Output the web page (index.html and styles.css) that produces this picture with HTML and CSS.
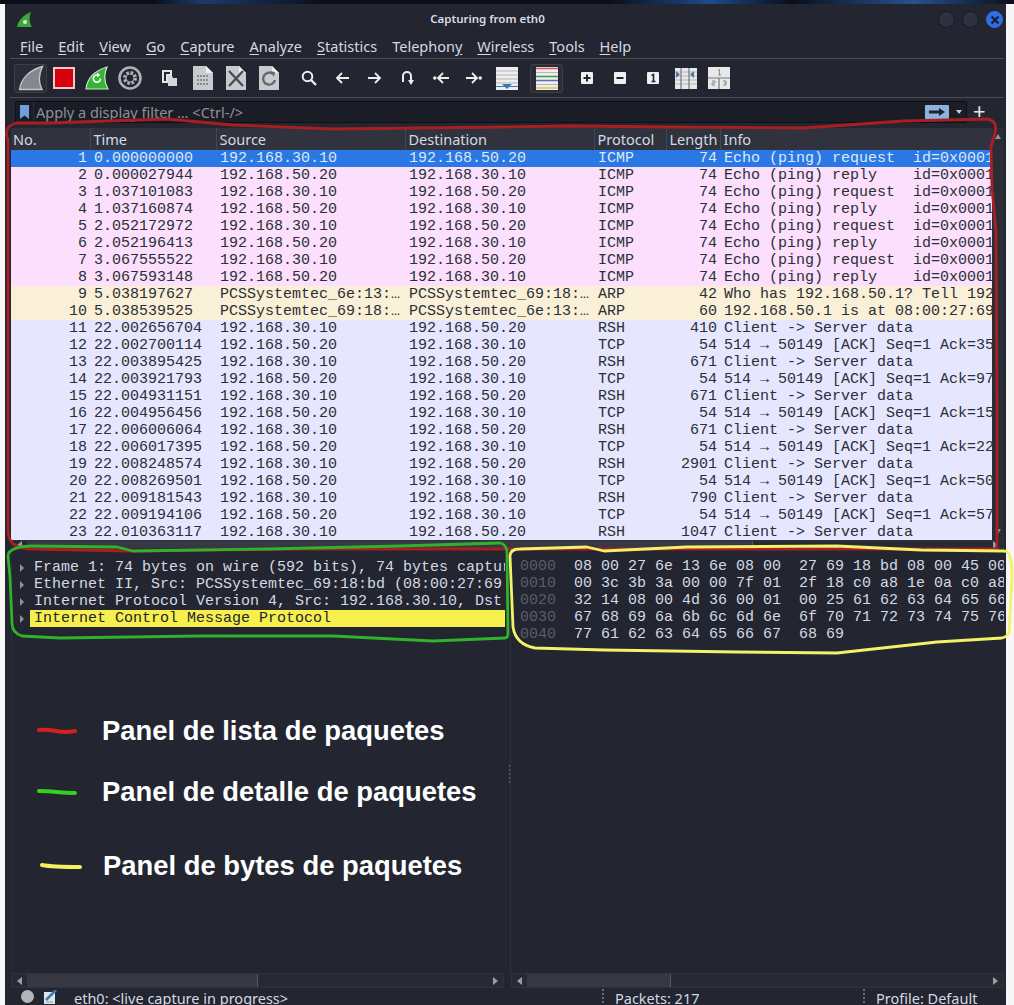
FILE: index.html
```html
<!DOCTYPE html>
<html lang="es">
<head>
    <meta charset="UTF-8">
    <meta name="viewport" content="width=device-width, initial-scale=1.0">
    <title>Capturing from eth0</title>
    <link rel="stylesheet" href="styles.css">
</head>
<body>
    <div class="wallpaper"></div>
    <div class="window">
        <header class="titlebar">
            <svg class="logo" width="15" height="15" viewBox="0 0 15 15"><path d="M0 15C1 9 6 3 14 0C12 5 12 10 15 15Z" fill="#3aa83a"/><circle cx="8" cy="10" r="2" fill="#d8f0d8"/></svg>
            <span class="title">Capturing from eth0</span>
            <div class="controls">
                <span class="ctl"></span>
                <span class="ctl"></span>
                <span class="ctl ctl-close"><svg width="10" height="10" viewBox="0 0 10 10"><path d="M1.5 1.5L8.5 8.5M8.5 1.5L1.5 8.5" stroke="#16203a" stroke-width="2.4"/></svg></span>
            </div>
        </header>

        <nav class="menu">
            <a><u>F</u>ile</a>
            <a><u>E</u>dit</a>
            <a><u>V</u>iew</a>
            <a><u>G</u>o</a>
            <a><u>C</u>apture</a>
            <a><u>A</u>nalyze</a>
            <a><u>S</u>tatistics</a>
            <a>Telephon<u>y</u></a>
            <a><u>W</u>ireless</a>
            <a><u>T</u>ools</a>
            <a><u>H</u>elp</a>
        </nav>

        <div class="toolbar">
            <span class="tool tool-on"><svg width="26" height="26" viewBox="0 0 26 26"><path d="M1.5 24.5C3 14 11 5 24.5 1.5C21 9 20 17 24 24.5Z" fill="#85878d" stroke="#c4c5c8" stroke-width="1.4"/></svg></span>
            <span class="tool"><svg width="22" height="22" viewBox="0 0 22 22"><rect x="1" y="1" width="20" height="20" fill="#d8000c" stroke="#f0c8c4" stroke-width="2"/></svg></span>
            <span class="tool"><svg width="24" height="24" viewBox="0 0 24 24"><path d="M1 23C2 13 9 5 22 1C19 8 19 16 23 23Z" fill="#38b238" stroke="#c8ecc8" stroke-width="1.2"/><path d="M15.500 12.500A3.600 3.600 0 1 1 12 9" fill="none" stroke="#f2fff2" stroke-width="1.700"/><path d="M12 6.500l3.500 2.500-3.500 2.500z" fill="#f2fff2"/></svg></span>
            <span class="tool"><svg width="24" height="24" viewBox="0 0 24 24"><circle cx="12" cy="12" r="10.500" fill="none" stroke="#aeb0b5" stroke-width="2.600"/><circle cx="12" cy="12" r="5.500" fill="none" stroke="#aeb0b5" stroke-width="3" stroke-dasharray="2.600 1.700"/><circle cx="12" cy="12" r="4" fill="none" stroke="#aeb0b5" stroke-width="1.200"/></svg></span>
            <span class="sep"></span>
            <span class="tool"><svg width="15" height="17" viewBox="0 0 15 17"><path d="M1 1H9V5H5V12H1Z" fill="none" stroke="#e4e5e8" stroke-width="2"/><path d="M6 6H10L11 8H15V16H6Z" fill="#d4d5d8"/></svg></span>
            <span class="tool"><svg width="20" height="24" viewBox="0 0 20 24"><path d="M0 0H13L20 7V24H0Z" fill="#c9cacd"/><path d="M13 0L20 7H13Z" fill="#eeeeee"/><path d="M4 10H16M4 14H16M4 18H16" stroke="#8a8b90" stroke-width="2" stroke-dasharray="2 1"/></svg></span>
            <span class="tool"><svg width="20" height="24" viewBox="0 0 20 24"><path d="M0 0H13L20 7V24H0Z" fill="#c9cacd"/><path d="M13 0L20 7H13Z" fill="#eeeeee"/><path d="M3 5L17 20M17 5L3 20" stroke="#4a4c54" stroke-width="2.400"/></svg></span>
            <span class="tool"><svg width="20" height="24" viewBox="0 0 20 24"><path d="M0 0H13L20 7V24H0Z" fill="#c9cacd"/><path d="M13 0L20 7H13Z" fill="#eeeeee"/><path d="M14 8A6 6 0 1 0 16 14" fill="none" stroke="#65676e" stroke-width="2.400"/><path d="M11 5l5 1-1 5z" fill="#65676e"/></svg></span>
            <span class="sep"></span>
            <span class="tool"><svg width="16" height="16" viewBox="0 0 16 16"><circle cx="6.500" cy="6.500" r="4.800" fill="none" stroke="#eceded" stroke-width="2"/><path d="M10 10L15 15" stroke="#eceded" stroke-width="2.400"/></svg></span>
            <span class="tool"><svg width="14" height="12" viewBox="0 0 14 12"><path d="M14 6H2M7 1L2 6L7 11" fill="none" stroke="#eceded" stroke-width="1.800"/></svg></span>
            <span class="tool"><svg width="14" height="12" viewBox="0 0 14 12"><path d="M0 6H12M7 1L12 6L7 11" fill="none" stroke="#eceded" stroke-width="1.800"/></svg></span>
            <span class="tool"><svg width="13" height="14" viewBox="0 0 13 14"><path d="M2 11V5A4 4 0 0 1 10 5V10" fill="none" stroke="#eceded" stroke-width="2"/><path d="M7 9H13L10 14Z" fill="#eceded"/></svg></span>
            <span class="tool"><svg width="16" height="12" viewBox="0 0 16 12"><circle cx="1.800" cy="6" r="1.800" fill="#eceded"/><path d="M16 6H6M10 1L5 6L10 11" fill="none" stroke="#eceded" stroke-width="1.800"/></svg></span>
            <span class="tool"><svg width="16" height="12" viewBox="0 0 16 12"><circle cx="14.200" cy="6" r="1.800" fill="#eceded"/><path d="M0 6H10M6 1L11 6L6 11" fill="none" stroke="#eceded" stroke-width="1.800"/></svg></span>
            <span class="tool"><svg width="22" height="23" viewBox="0 0 22 23"><rect width="22" height="23" fill="#eeeeee"/><path d="M0 4H22M0 8H22M0 12H22M0 16H22" stroke="#b4b5b9" stroke-width="1"/><path d="M6 17H16L11 22Z" fill="#3b78b8"/><rect x="0" y="19" width="22" height="1" fill="#3b78b8"/></svg></span>
            <span class="sep"></span>
            <span class="tool tool-on"><svg width="22" height="23" viewBox="0 0 22 23"><rect width="22" height="23" fill="#eeeeee"/><path d="M0 1.500H22" stroke="#d55" stroke-width="1.500"/><path d="M0 5.500H22" stroke="#b4b5b9"/><path d="M0 9.500H22" stroke="#3c9c3c" stroke-width="1.500"/><path d="M0 13.500H22" stroke="#5a6cc0" stroke-width="1.500"/><path d="M0 17.500H22" stroke="#b4b5b9"/><path d="M0 21H22" stroke="#d8c040" stroke-width="1.500"/></svg></span>
            <span class="sep"></span>
            <span class="tool"><svg width="12" height="12" viewBox="0 0 12 12"><rect width="12" height="12" rx="1" fill="#f0f0f0"/><path d="M6 2.500V9.500M2.500 6H9.500" stroke="#23252f" stroke-width="2"/></svg></span>
            <span class="tool"><svg width="12" height="12" viewBox="0 0 12 12"><rect width="12" height="12" rx="1" fill="#f0f0f0"/><path d="M2.500 6H9.500" stroke="#23252f" stroke-width="2"/></svg></span>
            <span class="tool"><svg width="12" height="12" viewBox="0 0 12 12"><rect width="12" height="12" rx="1" fill="#f0f0f0"/><path d="M4.500 3.500L6.500 2.500V9.500M4.500 9.500H8.500" fill="none" stroke="#23252f" stroke-width="1.600"/></svg></span>
            <span class="tool"><svg width="22" height="21" viewBox="0 0 22 21"><rect width="22" height="21" fill="#e8e8e8"/><path d="M0 4H22M0 8H22M0 12H22M0 16H22" stroke="#b4b5b9"/><path d="M6 0V21M14 0V21" stroke="#77797e" stroke-width="1.200"/><path d="M1 3L5 6.500L1 10ZM19 3L15 6.500L19 10Z" fill="#3b78b8"/></svg></span>
            <span class="tool"><svg width="22" height="22" viewBox="0 0 22 22"><rect width="22" height="22" fill="#e8e8e8"/><path d="M0 11H22M11 11V22" stroke="#77797e" stroke-width="1.200"/><path d="M10 3L11.500 2.500V8M10 8H13M4 14H7V16H4V18H7M15 14H18V18H15M16 16H18" fill="none" stroke="#77797e" stroke-width=".8"/></svg></span>
        </div>

        <div class="filter">
            <div class="filter-box">
                <svg class="bookmark" width="9" height="14" viewBox="0 0 9 14"><path d="M0 0H9V14L4.500 10.500L0 14Z" fill="#6c9fdc"/></svg>
                <span class="filter-text">Apply a display filter … &lt;Ctrl-/&gt;</span>
                <span class="apply"><svg width="16" height="8" viewBox="0 0 16 8"><path d="M0 2.500H10V0L16 4L10 8V5.500H0Z" fill="#1d2230"/></svg></span>
                <span class="drop"></span>
            </div>
            <span class="plus">+</span>
        </div>

        <div class="list">
            <div class="list-scroll">
                <table class="packets">
                    <thead>
                        <tr>
                            <th class="c-no">No.</th>
                            <th class="c-time">Time</th>
                            <th class="c-addr">Source</th>
                            <th class="c-addr">Destination</th>
                            <th class="c-proto">Protocol</th>
                            <th class="c-len">Length</th>
                            <th class="c-info">Info</th>
                        </tr>
                    </thead>
                    <tbody>
                        <tr class="sel"><td class="r">1</td><td>0.000000000</td><td>192.168.30.10</td><td>192.168.50.20</td><td>ICMP</td><td class="r">74</td><td>Echo (ping) request  id=0x0001</td></tr>
                        <tr class="icmp"><td class="r">2</td><td>0.000027944</td><td>192.168.50.20</td><td>192.168.30.10</td><td>ICMP</td><td class="r">74</td><td>Echo (ping) reply    id=0x0001</td></tr>
                        <tr class="icmp"><td class="r">3</td><td>1.037101083</td><td>192.168.30.10</td><td>192.168.50.20</td><td>ICMP</td><td class="r">74</td><td>Echo (ping) request  id=0x0001</td></tr>
                        <tr class="icmp"><td class="r">4</td><td>1.037160874</td><td>192.168.50.20</td><td>192.168.30.10</td><td>ICMP</td><td class="r">74</td><td>Echo (ping) reply    id=0x0001</td></tr>
                        <tr class="icmp"><td class="r">5</td><td>2.052172972</td><td>192.168.30.10</td><td>192.168.50.20</td><td>ICMP</td><td class="r">74</td><td>Echo (ping) request  id=0x0001</td></tr>
                        <tr class="icmp"><td class="r">6</td><td>2.052196413</td><td>192.168.50.20</td><td>192.168.30.10</td><td>ICMP</td><td class="r">74</td><td>Echo (ping) reply    id=0x0001</td></tr>
                        <tr class="icmp"><td class="r">7</td><td>3.067555522</td><td>192.168.30.10</td><td>192.168.50.20</td><td>ICMP</td><td class="r">74</td><td>Echo (ping) request  id=0x0001</td></tr>
                        <tr class="icmp"><td class="r">8</td><td>3.067593148</td><td>192.168.50.20</td><td>192.168.30.10</td><td>ICMP</td><td class="r">74</td><td>Echo (ping) reply    id=0x0001</td></tr>
                        <tr class="arp"><td class="r">9</td><td>5.038197627</td><td>PCSSystemtec_6e:13:…</td><td>PCSSystemtec_69:18:…</td><td>ARP</td><td class="r">42</td><td>Who has 192.168.50.1? Tell 192</td></tr>
                        <tr class="arp"><td class="r">10</td><td>5.038539525</td><td>PCSSystemtec_69:18:…</td><td>PCSSystemtec_6e:13:…</td><td>ARP</td><td class="r">60</td><td>192.168.50.1 is at 08:00:27:69</td></tr>
                        <tr class="tcp"><td class="r">11</td><td>22.002656704</td><td>192.168.30.10</td><td>192.168.50.20</td><td>RSH</td><td class="r">410</td><td>Client -&gt; Server data</td></tr>
                        <tr class="tcp"><td class="r">12</td><td>22.002700114</td><td>192.168.50.20</td><td>192.168.30.10</td><td>TCP</td><td class="r">54</td><td>514 → 50149 [ACK] Seq=1 Ack=35</td></tr>
                        <tr class="tcp"><td class="r">13</td><td>22.003895425</td><td>192.168.30.10</td><td>192.168.50.20</td><td>RSH</td><td class="r">671</td><td>Client -&gt; Server data</td></tr>
                        <tr class="tcp"><td class="r">14</td><td>22.003921793</td><td>192.168.50.20</td><td>192.168.30.10</td><td>TCP</td><td class="r">54</td><td>514 → 50149 [ACK] Seq=1 Ack=97</td></tr>
                        <tr class="tcp"><td class="r">15</td><td>22.004931151</td><td>192.168.30.10</td><td>192.168.50.20</td><td>RSH</td><td class="r">671</td><td>Client -&gt; Server data</td></tr>
                        <tr class="tcp"><td class="r">16</td><td>22.004956456</td><td>192.168.50.20</td><td>192.168.30.10</td><td>TCP</td><td class="r">54</td><td>514 → 50149 [ACK] Seq=1 Ack=15</td></tr>
                        <tr class="tcp"><td class="r">17</td><td>22.006006064</td><td>192.168.30.10</td><td>192.168.50.20</td><td>RSH</td><td class="r">671</td><td>Client -&gt; Server data</td></tr>
                        <tr class="tcp"><td class="r">18</td><td>22.006017395</td><td>192.168.50.20</td><td>192.168.30.10</td><td>TCP</td><td class="r">54</td><td>514 → 50149 [ACK] Seq=1 Ack=22</td></tr>
                        <tr class="tcp"><td class="r">19</td><td>22.008248574</td><td>192.168.30.10</td><td>192.168.50.20</td><td>RSH</td><td class="r">2901</td><td>Client -&gt; Server data</td></tr>
                        <tr class="tcp"><td class="r">20</td><td>22.008269501</td><td>192.168.50.20</td><td>192.168.30.10</td><td>TCP</td><td class="r">54</td><td>514 → 50149 [ACK] Seq=1 Ack=50</td></tr>
                        <tr class="tcp"><td class="r">21</td><td>22.009181543</td><td>192.168.30.10</td><td>192.168.50.20</td><td>RSH</td><td class="r">790</td><td>Client -&gt; Server data</td></tr>
                        <tr class="tcp"><td class="r">22</td><td>22.009194106</td><td>192.168.50.20</td><td>192.168.30.10</td><td>TCP</td><td class="r">54</td><td>514 → 50149 [ACK] Seq=1 Ack=57</td></tr>
                        <tr class="tcp"><td class="r">23</td><td>22.010363117</td><td>192.168.30.10</td><td>192.168.50.20</td><td>RSH</td><td class="r">1047</td><td>Client -&gt; Server data</td></tr>
                    </tbody>
                </table>
            </div>
            <div class="vbar">
                <span class="vbar-up"></span>
                <span class="vbar-down"></span>
            </div>
        </div>

        <div class="hbar hbar-thin">
            <span class="arrow arrow-l"></span>
            <span class="thumb thumb-list"></span>
            <span class="arrow arrow-r"></span>
        </div>

        <div class="panes">
            <section class="pane pane-left">
                <ul class="details">
                    <li><span class="tri"></span><span class="line">Frame 1: 74 bytes on wire (592 bits), 74 bytes captur</span></li>
                    <li><span class="tri"></span><span class="line">Ethernet II, Src: PCSSystemtec_69:18:bd (08:00:27:69</span></li>
                    <li><span class="tri"></span><span class="line">Internet Protocol Version 4, Src: 192.168.30.10, Dst</span></li>
                    <li><span class="tri"></span><span class="line line-hit">Internet Control Message Protocol</span></li>
                </ul>
                <div class="legend">
                    <div class="legend-row">
                        <svg width="40" height="8" viewBox="0 0 40 8"><path d="M2 3C12 2 16 3 22 4.500C28 5.500 32 5 38 4" fill="none" stroke="#d4211f" stroke-width="4" stroke-linecap="round"/></svg>
                        <span>Panel de lista de paquetes</span>
                    </div>
                    <div class="legend-row legend-green">
                        <svg width="40" height="8" viewBox="0 0 40 8"><path d="M2 3C14 3 26 5 38 5" fill="none" stroke="#2fd41f" stroke-width="4" stroke-linecap="round"/></svg>
                        <span>Panel de detalle de paquetes</span>
                    </div>
                    <div class="legend-row legend-yellow">
                        <svg width="42" height="8" viewBox="0 0 42 8"><path d="M2 3C12 5 26 5 40 5" fill="none" stroke="#f4f060" stroke-width="4" stroke-linecap="round"/></svg>
                        <span>Panel de bytes de paquetes</span>
                    </div>
                </div>
            </section>
            <div class="grip"></div>
            <section class="pane pane-right">
<pre class="hex"><span class="off">0000</span>  08 00 27 6e 13 6e 08 00  27 69 18 bd 08 00 45 00
<span class="off">0010</span>  00 3c 3b 3a 00 00 7f 01  2f 18 c0 a8 1e 0a c0 a8
<span class="off">0020</span>  32 14 08 00 4d 36 00 01  00 25 61 62 63 64 65 66
<span class="off">0030</span>  67 68 69 6a 6b 6c 6d 6e  6f 70 71 72 73 74 75 76
<span class="off">0040</span>  77 61 62 63 64 65 66 67  68 69</pre>
            </section>
        </div>

        <div class="bottom-bars">
            <div class="hbar hbar-left">
                <span class="arrow arrow-l"></span>
                <span class="thumb thumb-left"></span>
                <span class="arrow arrow-r"></span>
            </div>
            <div class="hbar hbar-right">
                <span class="arrow arrow-l"></span>
                <span class="thumb thumb-right"></span>
                <span class="arrow arrow-r"></span>
            </div>
        </div>

        <footer class="status">
            <span class="led"></span>
            <svg class="note" width="13" height="14" viewBox="0 0 13 14"><rect y="2" width="11" height="12" fill="#dfe3ea"/><path d="M2 10L10 2L12 0" stroke="#3b78b8" stroke-width="2.500"/><path d="M2 12H9" stroke="#999"/></svg>
            <span class="status-main">eth0: &lt;live capture in progress&gt;</span>
            <span class="status-packets">Packets: 217</span>
            <span class="status-profile">Profile: Default</span>
        </footer>
    </div>

    <!-- hand drawn marks on top of the screenshot -->
    <svg class="marks" width="1014" height="1005" viewBox="0 0 1014 1005">
        <path class="mark-red" d="M8 140C4 130 8 125 17 123L50 123L167 119L233 125L333 129L504 127L570 126L671 127L804 128L904 121L987 119C994 120 997 124 995 133L991 147L992 187L996 233L997 400L997 549L700 549L300 549L130 551L30 549C14 548 8 542 8 530Z"/>
        <path class="mark-green" d="M8 556C8 549 20 546 33 546L117 547L133 551L267 549L400 546L500 543C505 544 507 548 507 553L508 633C508 637 507 638 505 638L433 641L333 636L200 636L60 638L22 636C15 634 12 630 12 623L10 577Z"/>
        <path class="mark-yellow" d="M510 556C510 551 513 549 520 549L587 547L604 551L687 547L837 546L921 550L1004 551C1009 551 1012 556 1012 577L1009 632C1008 636 1006 637 1002 638L937 642L837 653L737 652L604 650L535 648C524 646 515 640 513 627Z"/>
    </svg>
</body>
</html>
```

FILE: styles.css
```css
body {
    margin: 0;
    height: 1005px;
    overflow: hidden;
    background-color: #f7f7f7;
    font-family: "Noto Sans", sans-serif;
    position: relative;
}

.wallpaper {
    height: 4px;
    background: linear-gradient(90deg, #0a0e1a 15%, #1c3a6e 20%, #0a0e1a 32%, #0a0e1a 60%, #1d4b8a 70%, #0a0e1a 78%, #27528e 90%, #0a0e1a);
}

.window {
    width: 1001px;
    height: 1001px;
    margin-left: 5px;
    background-color: #232530;
    color: #d3dae3;
    display: flex;
    flex-direction: column;
    overflow: hidden;
}

/* title bar */
.titlebar {
    height: 29px;
    flex: none;
    display: flex;
    align-items: center;
    justify-content: center;
    padding-right: 36px;
    position: relative;
}
.logo { position: absolute; left: 12px; top: 8px; }
.title { font-size: 11.5px; font-weight: 600; color: #d8dde5; }
.controls {
    position: absolute;
    right: 3px;
    top: 7px;
    display: flex;
    gap: 7px;
}
.ctl {
    width: 17px;
    height: 17px;
    box-sizing: border-box;
    border-radius: 50%;
    background-color: #2e3142;
    border: 1px solid #171922;
    display: flex;
    align-items: center;
    justify-content: center;
}
.ctl-close { background-color: #2f6fe4; border-color: #2f6fe4; }

/* menu */
.menu {
    height: 25px;
    flex: none;
    display: flex;
    align-items: center;
    gap: 15px;
    border-bottom: 1px solid #4b4e57;
    font-size: 14.5px;
    margin-left: 5px;
    margin-right: 2px;
    padding-left: 10px;
}
.menu u { text-underline-offset: 2px; }

/* toolbar */
.toolbar {
    height: 38px;
    flex: none;
    display: flex;
    align-items: center;
    border-bottom: 1px solid #4b4e57;
    margin-left: 5px;
    margin-right: 2px;
    padding-left: 4px;
}
.tool {
    width: 33px;
    height: 29px;
    flex: none;
    display: flex;
    align-items: center;
    justify-content: center;
    box-sizing: border-box;
}
.tool-on {
    background-color: #2a2c37;
    border: 1px solid #3d404a;
    border-radius: 3px;
}
.sep { width: 7px; flex: none; }

/* display filter */
.filter {
    height: 30px;
    flex: none;
    display: flex;
    align-items: flex-start;
    padding: 3px 0 0 10px;
    box-sizing: border-box;
}
.filter-box {
    width: 952px;
    height: 22px;
    background-color: #1b1d26;
    border: 1px solid #0f1016;
    box-sizing: border-box;
    display: flex;
    align-items: center;
    border-radius: 2px;
}
.bookmark { margin-left: 4px; }
.filter-text {
    margin-left: 4px;
    padding-left: 2px;
    border-left: 1px solid #2e3039;
    font-size: 14.5px;
    color: #8d9097;
    flex: 1;
    line-height: 20px;
}
.apply {
    width: 24px;
    height: 14px;
    background-color: #8db2de;
    border-radius: 1px;
    display: flex;
    align-items: center;
    justify-content: center;
}
.drop {
    width: 0;
    height: 0;
    margin: 0 4px 0 7px;
    border-left: 3px solid transparent;
    border-right: 3px solid transparent;
    border-top: 4px solid #c8ccd2;
}
.plus {
    margin-left: 6px;
    font-size: 22px;
    line-height: 18px;
    color: #e8e8e8;
}

/* packet list */
.list {
    height: 412px;
    flex: none;
    display: flex;
    margin: 0 2px 0 6px;
}
.list-scroll { width: 981px; overflow: hidden; }
.packets {
    width: 981px;
    table-layout: fixed;
    border-collapse: collapse;
}
.packets th {
    height: 22px;
    padding: 0 0 0 3px;
    text-align: left;
    font-size: 14.5px;
    font-weight: 400;
    background-color: #30333d;
    color: #d3dae3;
    border-right: 1px solid #454852;
    box-sizing: border-box;
}
.packets th.c-no { width: 79px; padding-left: 2px; }
.c-time { width: 126px; }
.c-addr { width: 189px; }
.c-proto { width: 72px; }
.c-len { width: 54px; }
.c-info { width: 272px; }
.packets td {
    height: 17px;
    padding: 0 3px 0 4px;
    font-family: "Liberation Mono", monospace;
    font-size: 15px;
    line-height: 17px;
    white-space: pre;
    overflow: hidden;
    color: #2a2f36;
}
.packets td.r { text-align: right; }
.icmp td { background-color: #fbdffc; }
.arp td { background-color: #faf0d7; }
.tcp td { background-color: #e7e6ff; }
.sel td { background-color: #2b78e4; color: #dce9fb; }

.vbar {
    width: 12px;
    background-color: #2a2c36;
    display: flex;
    flex-direction: column;
    justify-content: space-between;
    padding: 6px 0 6px;
    box-sizing: border-box;
    align-items: center;
}
.vbar-up {
    border-left: 3px solid transparent;
    border-right: 3px solid transparent;
    border-bottom: 5px solid #8f929a;
}
.vbar-down {
    border-left: 3px solid transparent;
    border-right: 3px solid transparent;
    border-top: 5px solid #8f929a;
}

/* horizontal scroll bars */
.hbar {
    display: flex;
    align-items: center;
    background-color: #272933;
    border: 1px solid #2f323b;
    box-sizing: border-box;
    position: relative;
}
.hbar-thin { height: 9px; flex: none; margin: 0 2px 0 6px; }
.thumb {
    align-self: stretch;
    background-color: #363944;
    border-right: 1px solid #555862;
}
.thumb-list { width: 725px; }
.thumb-left { width: 230px; }
.thumb-right { width: 143px; }
.arrow {
    width: 15px;
    flex: none;
    display: flex;
    justify-content: center;
}
.arrow-l::before {
    content: "";
    border-top: 4px solid transparent;
    border-bottom: 4px solid transparent;
    border-right: 5px solid #9a9da5;
}
.arrow-r { margin-left: auto; }
.arrow-r::before {
    content: "";
    border-top: 4px solid transparent;
    border-bottom: 4px solid transparent;
    border-left: 5px solid #9a9da5;
}

/* lower panes */
.panes {
    flex: 1;
    min-height: 0;
    display: flex;
    margin: 0 2px 0 6px;
}
.pane { padding-top: 9px; overflow: hidden; }
.pane-left { width: 494px; flex: none; border-left: 1px solid #2c2e38; box-sizing: border-box; }
.pane-right { width: 493px; flex: none; }
.grip {
    width: 6px;
    flex: none;
    border-right: 1px solid #2f323b;
    box-sizing: border-box;
    background: repeating-linear-gradient(0deg, #5d6069 0 2px, transparent 2px 4px) 4px 216px / 2px 18px no-repeat;
}

.details {
    list-style: none;
    margin: 0;
    padding: 1px 0 0;
    font-family: "Liberation Mono", monospace;
    font-size: 15px;
    line-height: 17px;
}
.details li {
    height: 17px;
    display: flex;
    align-items: center;
    white-space: pre;
}
.tri {
    width: 0;
    height: 0;
    flex: none;
    margin: 0 6px 0 8px;
    border-top: 4px solid transparent;
    border-bottom: 4px solid transparent;
    border-left: 4px solid #8f929a;
}
.line { padding-left: 4px; flex: 1; overflow: hidden; }
.line-hit { background-color: #f7ef4c; color: #23252f; }

.hex {
    margin: 0;
    padding-left: 9px;
    font-family: "Liberation Mono", monospace;
    font-size: 15px;
    line-height: 17px;
    overflow: hidden;
    color: #d3dae3;
}
.off { color: #5b5e68; }

/* legend written over the panes */
.legend {
    padding: 88px 0 0 25px;
    color: #fff;
    font-family: "Liberation Sans", sans-serif;
    font-weight: 700;
    font-size: 27.4px;
}
.legend-row {
    display: flex;
    align-items: center;
    gap: 25px;
    height: 32px;
}
.legend-green { margin-top: 29px; }
.legend-yellow { margin-top: 42px; padding-left: 3px; gap: 21px; }

.bottom-bars {
    height: 15px;
    flex: none;
    display: flex;
    justify-content: space-between;
    margin: 0 2px 0 6px;
}
.hbar-left { width: 493px; }
.hbar-right { width: 493px; }

/* status bar */
.status {
    flex: none;
    height: 17px;
    display: flex;
    align-items: center;
    font-size: 14.5px;
    line-height: 17px;
    position: relative;
    overflow: hidden;
}
.led {
    width: 13px;
    height: 13px;
    margin-left: 16px;
    border-radius: 50%;
    background-color: #b4b5b9;
    flex: none;
}
.note { margin-left: 10px; flex: none; }
.status-main { margin-left: 17px; width: 528px; padding-top: 4px; }
.status-packets { width: 248px; padding: 4px 0 0 11px; border-left: 2px dotted #6a6d76; }
.status-profile { padding: 4px 0 0 11px; border-left: 2px dotted #6a6d76; }

/* annotations */
.marks {
    position: absolute;
    left: 0;
    top: 0;
    pointer-events: none;
    fill: none;
    stroke-width: 2.8;
    stroke-linejoin: round;
}
.mark-red { stroke: #a81f22; }
.mark-green { stroke: #2fb32a; }
.mark-yellow { stroke: #f3f06a; }
```
